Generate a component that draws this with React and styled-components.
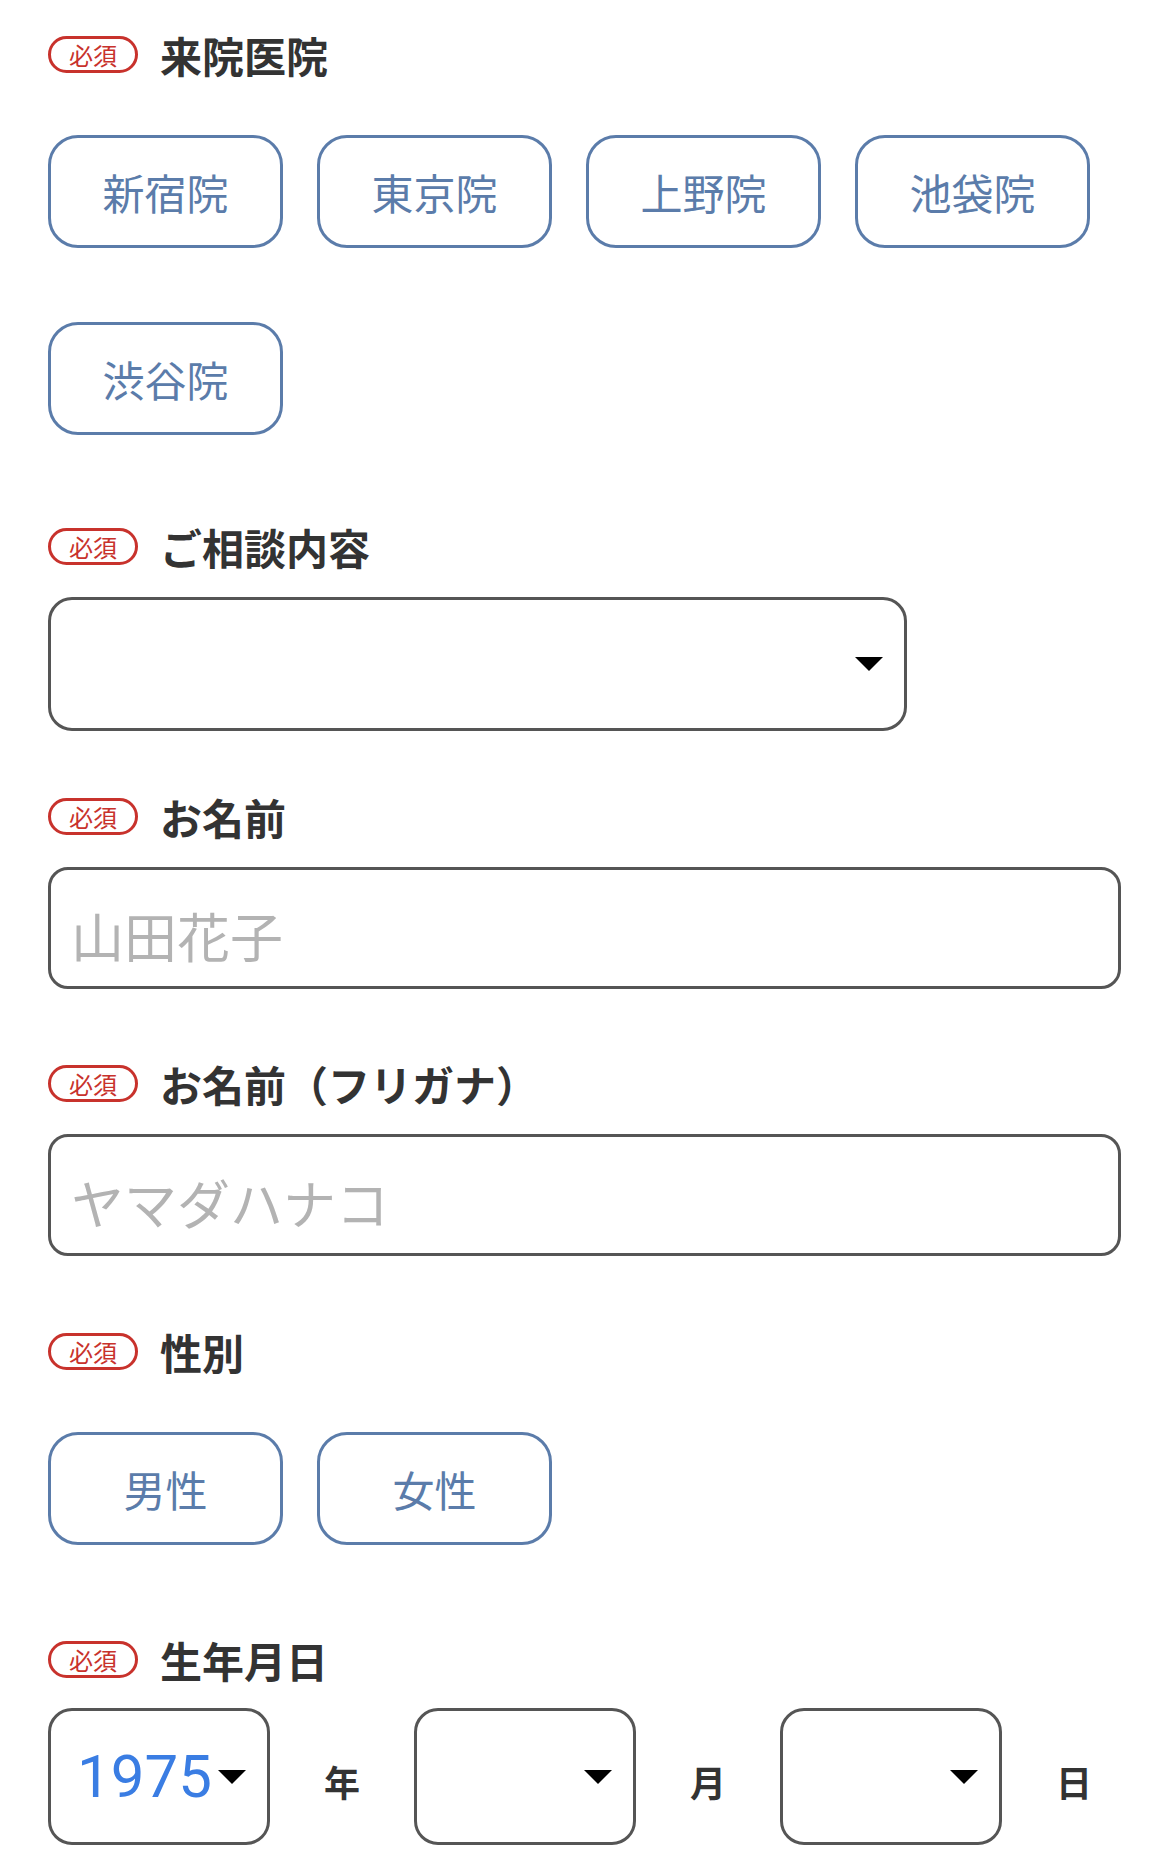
import React from 'react';
import styled, { createGlobalStyle } from 'styled-components';

const GlobalStyle = createGlobalStyle`
  html, body {
    margin: 0;
    padding: 0;
    background: #fff;
  }
  body {
    font-family: "Noto Sans CJK JP", "Noto Sans", sans-serif;
    color: #333;
  }
  * {
    box-sizing: border-box;
  }
`;

const RED = '#c8322c';
const BLUE = '#5b7caa';
const LINE = '#555';

const Page = styled.form`
  width: 1170px;
  padding: 36px 0 40px 48px;
`;

const Section = styled.section`
  width: 1073px;
  margin-bottom: ${(p) => p.$after || 0}px;
`;

const LabelRow = styled.div`
  display: flex;
  align-items: center;
  gap: 22px;
  height: 37px;
`;

const Badge = styled.span`
  display: flex;
  align-items: center;
  justify-content: center;
  width: 90px;
  height: 37px;
  border: 3px solid ${RED};
  border-radius: 19px;
  color: ${RED};
  font-size: 24px;
  line-height: 1;
`;

const Heading = styled.span`
  font-size: 42px;
  font-weight: 700;
  line-height: 1;
  color: #333;
`;

const Options = styled.div`
  display: flex;
  flex-wrap: wrap;
  column-gap: 34px;
  row-gap: 74px;
  margin-top: 62px;
`;

const OptionButton = styled.button`
  width: 235px;
  height: 113px;
  border: 3px solid ${BLUE};
  border-radius: 30px;
  background: #fff;
  color: ${BLUE};
  font-family: "Noto Sans CJK JP", sans-serif;
  font-size: 42px;
  font-weight: 400;
  line-height: 1;
  padding: 0;
  cursor: pointer;
`;

const Control = styled.div`
  margin-top: ${(p) => p.$top || 32}px;
`;

const SelectWrap = styled.div`
  position: relative;
  flex-shrink: 0;
  width: ${(p) => p.$width}px;
  height: ${(p) => p.$height}px;

  &::after {
    content: '';
    position: absolute;
    right: 24px;
    top: 50%;
    transform: translateY(-50%);
    border-left: 14px solid transparent;
    border-right: 14px solid transparent;
    border-top: 14px solid #000;
    pointer-events: none;
  }
`;

const Select = styled.select`
  appearance: none;
  -webkit-appearance: none;
  width: 100%;
  height: 100%;
  border: 3px solid ${LINE};
  border-radius: 24px;
  background: #fff;
  padding: 0 0 0 26px;
  font-family: "Roboto", "Noto Sans CJK JP", sans-serif;
  font-size: 60px;
  color: #3a7de3;
  outline: none;
`;

const TextInput = styled.input`
  display: block;
  width: 1073px;
  height: 122px;
  border: 3px solid ${LINE};
  border-radius: 20px;
  padding: 14px 20px 0;
  font-family: "Noto Sans CJK JP", sans-serif;
  font-size: 53px;
  color: #333;
  outline: none;

  &::placeholder {
    color: #b3b3b3;
  }
`;

const DateRow = styled.div`
  display: flex;
  align-items: center;
  margin-top: 30px;
`;

const DateUnit = styled.span`
  flex-shrink: 0;
  width: 144px;
  padding-top: 8px;
  text-align: center;
  font-size: 36px;
  font-weight: 700;
  color: #333;
`;

const Label = ({ children }) => (
  <LabelRow>
    <Badge>必須</Badge>
    <Heading>{children}</Heading>
  </LabelRow>
);

const clinics = ['新宿院', '東京院', '上野院', '池袋院', '渋谷院'];
const genders = ['男性', '女性'];

const years = Array.from({ length: 80 }, (_, i) => 1940 + i);

export default function App() {
  return (
    <>
      <GlobalStyle />
      <Page onSubmit={(e) => e.preventDefault()}>
        <Section $after={93}>
          <Label>来院医院</Label>
          <Options>
            {clinics.map((c) => (
              <OptionButton type="button" key={c}>{c}</OptionButton>
            ))}
          </Options>
        </Section>

        <Section $after={67}>
          <Label>ご相談内容</Label>
          <Control>
            <SelectWrap $width={859} $height={134}>
              <Select defaultValue="">
                <option value="" />
                <option value="1">カウンセリング</option>
                <option value="2">施術</option>
              </Select>
            </SelectWrap>
          </Control>
        </Section>

        <Section $after={76}>
          <Label>お名前</Label>
          <Control>
            <TextInput type="text" placeholder="山田花子" />
          </Control>
        </Section>

        <Section $after={77}>
          <Label>お名前（フリガナ）</Label>
          <Control>
            <TextInput type="text" placeholder="ヤマダハナコ" />
          </Control>
        </Section>

        <Section $after={96}>
          <Label>性別</Label>
          <Options>
            {genders.map((g) => (
              <OptionButton type="button" key={g}>{g}</OptionButton>
            ))}
          </Options>
        </Section>

        <Section>
          <Label>生年月日</Label>
          <DateRow>
            <SelectWrap $width={222} $height={137}>
              <Select defaultValue="1975">
                {years.map((y) => (
                  <option key={y} value={y}>{y}</option>
                ))}
              </Select>
            </SelectWrap>
            <DateUnit>年</DateUnit>
            <SelectWrap $width={222} $height={137}>
              <Select defaultValue="">
                <option value="" />
                {Array.from({ length: 12 }, (_, i) => (
                  <option key={i} value={i + 1}>{i + 1}</option>
                ))}
              </Select>
            </SelectWrap>
            <DateUnit>月</DateUnit>
            <SelectWrap $width={222} $height={137}>
              <Select defaultValue="">
                <option value="" />
                {Array.from({ length: 31 }, (_, i) => (
                  <option key={i} value={i + 1}>{i + 1}</option>
                ))}
              </Select>
            </SelectWrap>
            <DateUnit>日</DateUnit>
          </DateRow>
        </Section>
      </Page>
    </>
  );
}
